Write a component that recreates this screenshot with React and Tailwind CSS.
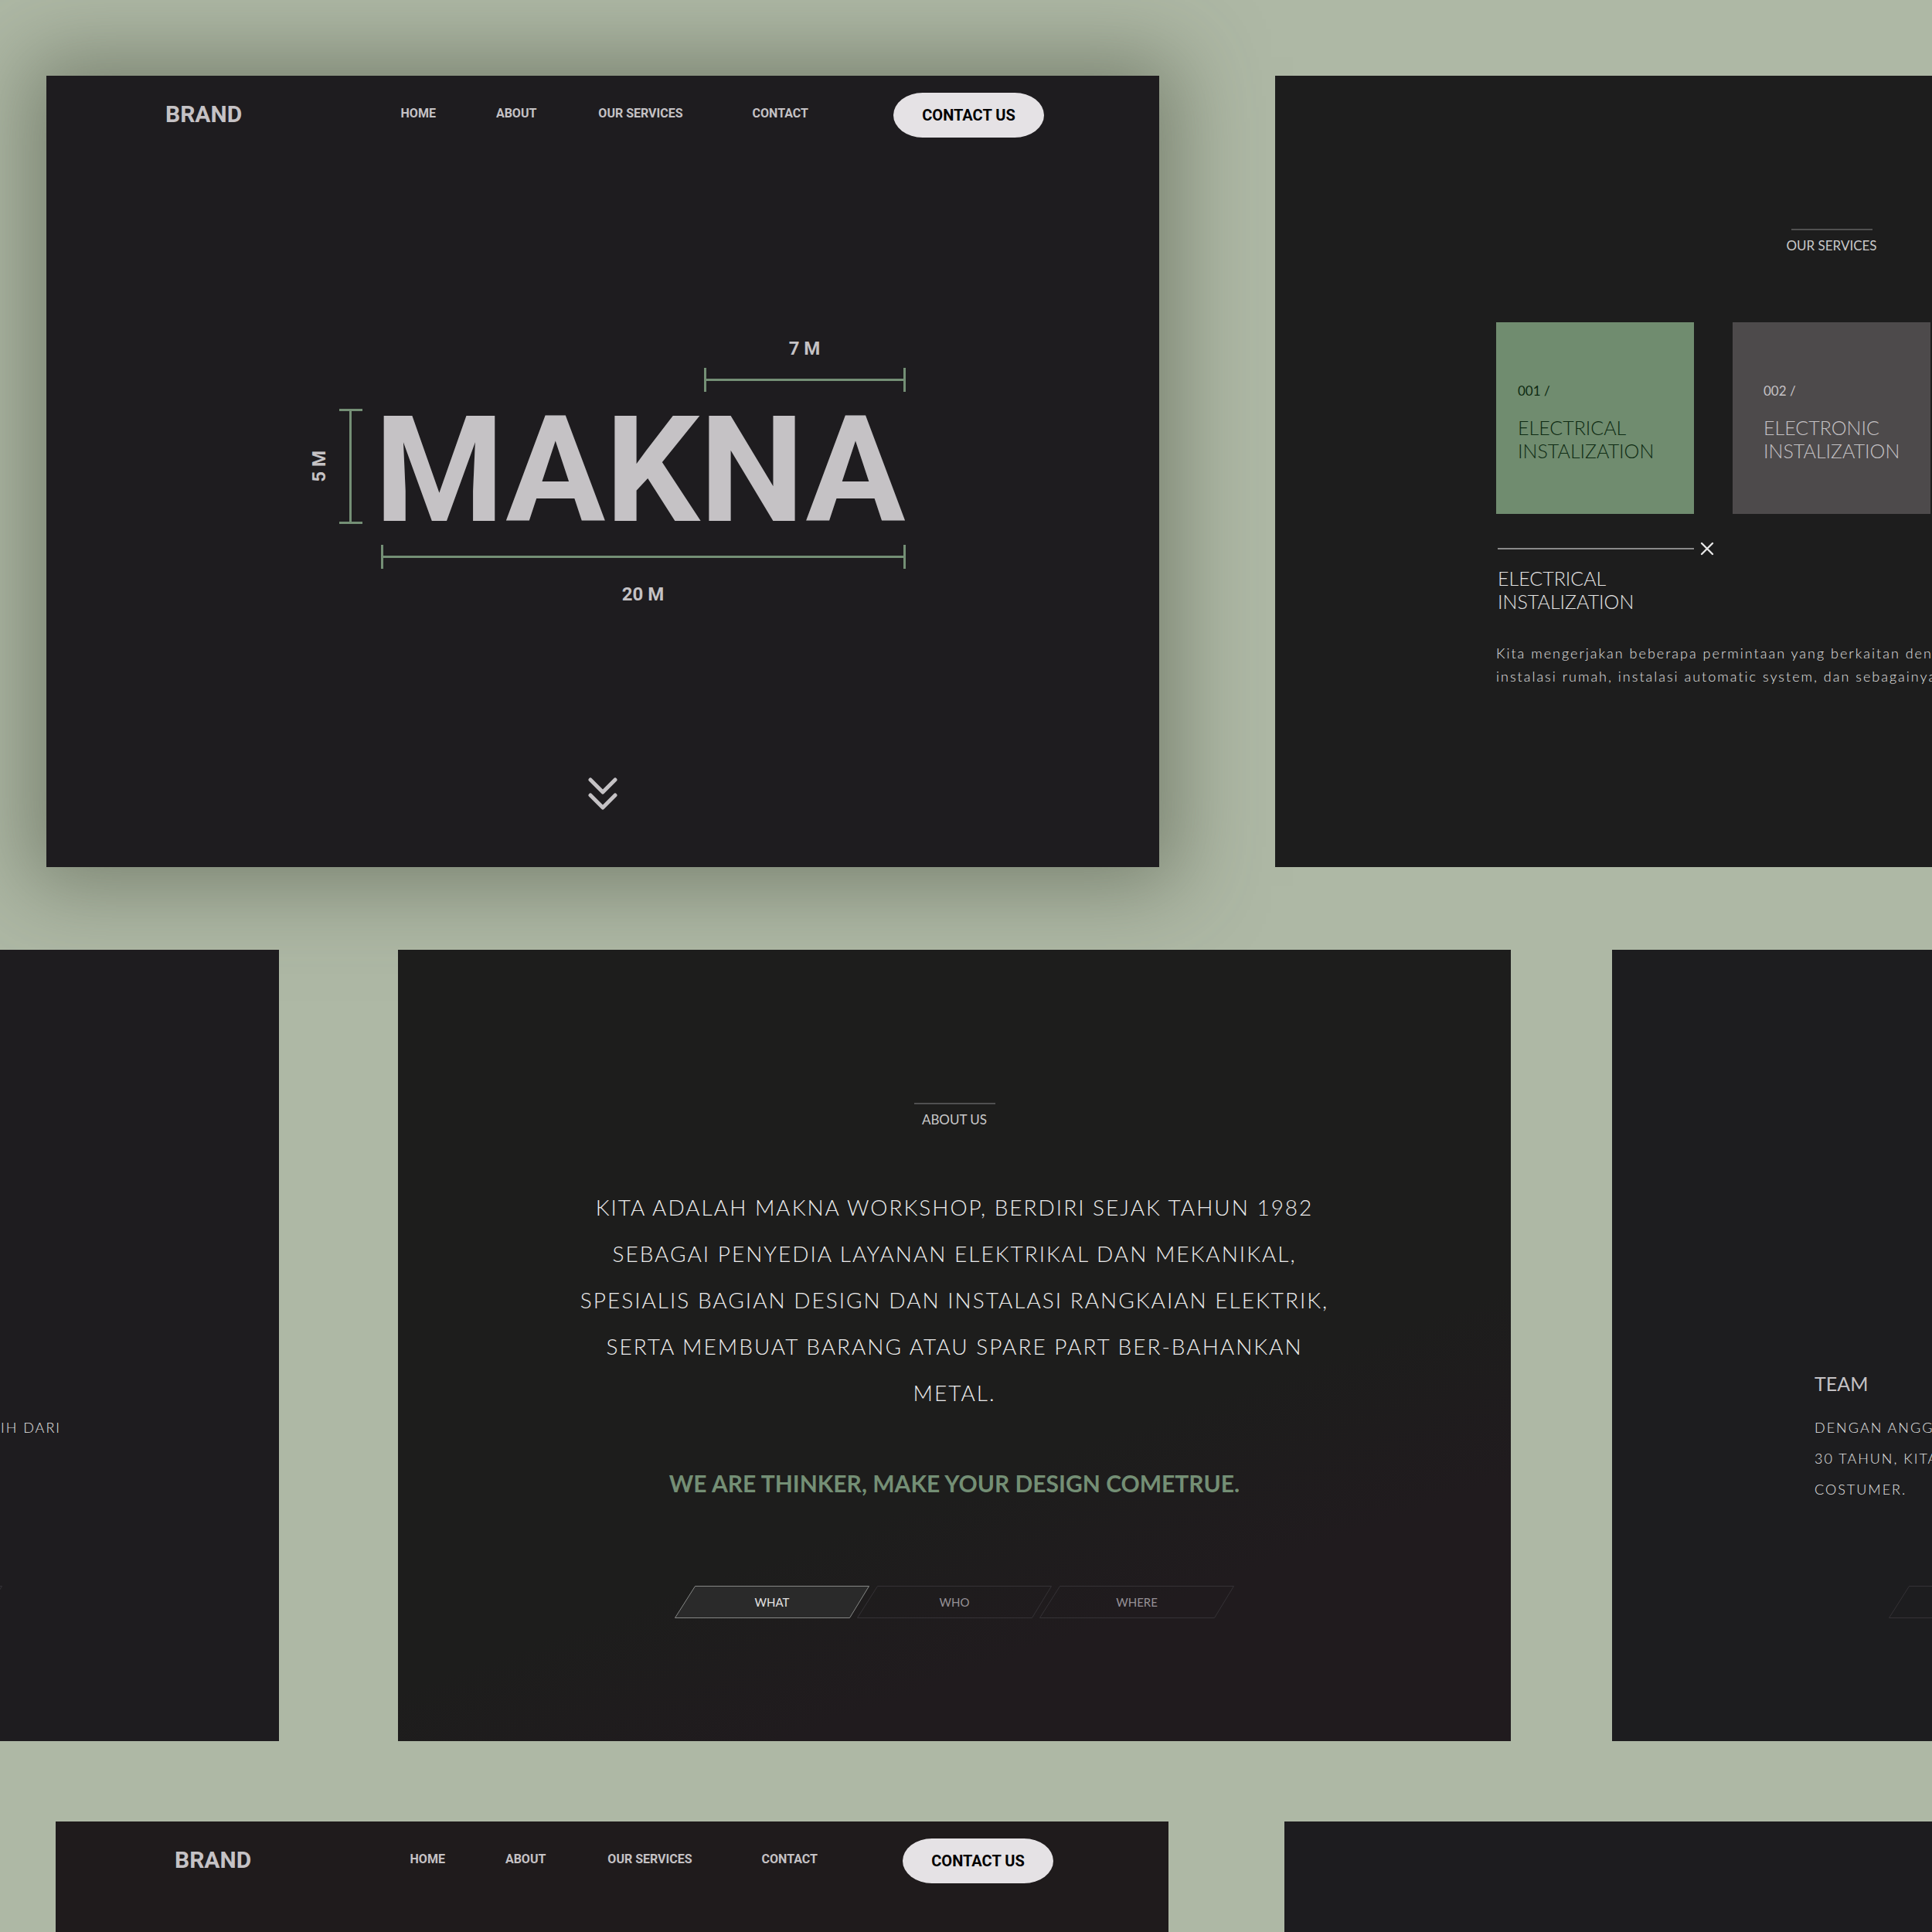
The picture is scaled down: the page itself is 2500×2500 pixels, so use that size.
const links = [
  { label: "HOME", gap: "" },
  { label: "ABOUT", gap: "ml-[78px]" },
  { label: "OUR SERVICES", gap: "ml-[80px]" },
  { label: "CONTACT", gap: "ml-[90px]" },
];

function NavBar() {
  return (
    <header className="flex items-start pt-[22px] pr-[149px] pl-[154px] font-['Roboto',sans-serif] leading-[56px] font-bold whitespace-nowrap text-[#c5c2c5]">
      <a href="#brand" className="text-[30px]">BRAND</a>
      <nav className="ml-auto flex text-base leading-[54px]">
        {links.map((l) => (
          <a key={l.label} href="#section" className={l.gap}>{l.label}</a>
        ))}
      </nav>
      <button type="button" className="ml-[110px] h-[58px] w-[195px] rounded-[38px/29px] bg-[#e5e2e5] text-xl font-bold text-black">
        CONTACT US
      </button>
    </header>
  );
}

function HorizontalRule() {
  return (
    <div className="flex h-[31px] items-center border-x-3 border-[#748f75]">
      <div className="h-[3px] w-full bg-[#748f75]" />
    </div>
  );
}

function Hero() {
  return (
    <section className="flex min-h-[1024px] flex-col bg-[#1e1c1f] shadow-[0_0_100px_24px_rgba(70,78,60,0.5)]">
      <NavBar />
      <div className="mt-[256px] grid grid-cols-[auto_679px] justify-center gap-x-6 pl-[10px] font-['Roboto',sans-serif] text-2xl leading-[34px] font-bold text-[#c5c2c5]">
        <div className="col-start-2 ml-auto w-[261px] text-center">
          <p className="mb-2">7 M</p>
          <HorizontalRule />
        </div>
        <div className="mt-[22px] flex items-center gap-3 self-start">
          <p className="rotate-180 leading-7 [writing-mode:vertical-rl]">5 M</p>
          <div className="flex h-[149px] w-[30px] justify-center border-y-3 border-[#748f75]">
            <div className="w-[3px] bg-[#748f75]" />
          </div>
        </div>
        <h1 className="mt-[27px] -ml-2 text-center text-[192px] leading-[149px]">MAKNA</h1>
        <div className="col-start-2 mt-[22px] text-center">
          <HorizontalRule />
          <p className="mt-4">20 M</p>
        </div>
      </div>
      <a href="#about" aria-label="Scroll down" className="mt-auto mb-[73px] self-center">
        <svg className="block h-[44px] w-[40px]" viewBox="0 0 40 44" fill="none" stroke="#c5c2c5" strokeWidth="5" strokeLinecap="round" strokeLinejoin="round">
          <path d="M4 4 20 20 36 4M4 24 20 40 36 24" />
        </svg>
      </a>
    </section>
  );
}

function SectionLabel({ children }) {
  return (
    <div className="flex flex-col items-center">
      <div className="h-[2px] w-[105px] bg-[#505050]" />
      <h2 className="mt-2 text-[17px] leading-6 text-[#c9c9c9]">{children}</h2>
    </div>
  );
}

function Services() {
  return (
    <section className="min-h-[1024px] overflow-hidden bg-[#1d1d1d] pt-[198px] pl-[286px] font-['Lato',sans-serif] whitespace-nowrap text-[#e4e4e4]">
      <div className="w-[868px]">
        <SectionLabel>OUR SERVICES</SectionLabel>
        <div className="mt-[87px] flex gap-[50px]">
          <article className="h-[248px] w-[256px] shrink-0 bg-[#708c6f] pt-[77px] pl-7 text-[#0d2a12]">
            <p className="text-[17px] leading-6">001 /</p>
            <h3 className="mt-5 text-[25px] leading-[30px] font-light">ELECTRICAL<br />INSTALIZATION</h3>
          </article>
          <article className="h-[248px] w-[256px] shrink-0 bg-[#4d4a4b] pt-[77px] pl-10 text-[#c5c2c5]">
            <p className="text-[17px] leading-6">002 /</p>
            <h3 className="mt-5 text-[25px] leading-[30px] font-light">ELECTRONIC<br />INSTALIZATION</h3>
          </article>
        </div>
        <div className="mt-9 flex items-center gap-2 pl-[2px]">
          <div className="h-[2px] w-[254px] bg-[#8a8a8a]" />
          <button type="button" aria-label="Close">
            <svg className="block size-[18px]" viewBox="0 0 18 18" fill="none" stroke="#e6e6e6" strokeWidth="2.4" strokeLinecap="round">
              <path d="M2 2 16 16M16 2 2 16" />
            </svg>
          </button>
        </div>
        <h3 className="mt-[14px] pl-[2px] text-[25px] leading-[30px] font-light">ELECTRICAL<br />INSTALIZATION</h3>
        <p className="mt-[37px] text-lg leading-[30px] font-light tracking-[2px]">
          Kita mengerjakan beberapa permintaan yang berkaitan dengan<br />
          instalasi rumah, instalasi automatic system, dan sebagainya.
        </p>
      </div>
    </section>
  );
}

function Tab({ children, active = false }) {
  return (
    <button type="button" aria-pressed={active} className={active ? "grid h-[42px] w-[252px] shrink-0 place-items-center text-[15px] text-[#e2e2e2]" : "grid h-[42px] w-[252px] shrink-0 place-items-center text-[15px] text-[#969196]"}>
      <svg className="col-start-1 row-start-1 block h-[42px] w-[252px]" viewBox="0 0 252 42" fill={active ? "#2a2a2a" : "none"} stroke={active ? "#868886" : "#353236"}>
        <path d="M26.5 .5H251.5L226.5 41.5H.5Z" />
      </svg>
      <span className="col-start-1 row-start-1">{children}</span>
    </button>
  );
}

function About() {
  return (
    <section className="min-h-[1024px] bg-[linear-gradient(160deg,#1d1d1c_62%,#201b1e_78%)] pt-[198px] text-center font-['Lato',sans-serif] text-[#ececec]">
      <SectionLabel>ABOUT US</SectionLabel>
      <p className="mx-auto mt-[71px] max-w-[980px] text-[28px] leading-[60px] font-light tracking-[2px]">
        KITA ADALAH MAKNA WORKSHOP, BERDIRI SEJAK TAHUN 1982 SEBAGAI PENYEDIA LAYANAN ELEKTRIKAL DAN MEKANIKAL, SPESIALIS BAGIAN DESIGN DAN INSTALASI RANGKAIAN ELEKTRIK, SERTA MEMBUAT BARANG ATAU SPARE PART BER-BAHANKAN METAL.
      </p>
      <p className="mt-[67px] text-[30px] leading-[40px] font-bold text-[#748f75]">WE ARE THINKER, MAKE YOUR DESIGN COMETRUE.</p>
      <div className="mt-[113px] flex justify-center -space-x-4">
        <Tab active>WHAT</Tab>
        <Tab>WHO</Tab>
        <Tab>WHERE</Tab>
      </div>
    </section>
  );
}

function Team() {
  return (
    <section className="min-h-[1024px] overflow-hidden bg-[#1d1d1f] pt-[545px] pl-[262px] font-['Lato',sans-serif] whitespace-nowrap text-[#e4e4e4]">
      <h2 className="text-[25px] leading-8 text-[#c5c2c5]">TEAM</h2>
      <p className="mt-[21px] text-lg leading-10 font-light tracking-[2px]">
        DENGAN ANGGOTA YANG LEBIH DARI<br />30 TAHUN, KITA MELAYANI<br />COSTUMER.
      </p>
      <div className="mt-[105px] ml-24 flex"><Tab>WHAT</Tab></div>
    </section>
  );
}

function Experience() {
  return (
    <section className="flex min-h-[1024px] flex-col items-end overflow-hidden bg-[#1e1c1f] pt-[598px] font-['Lato',sans-serif] text-lg whitespace-nowrap text-[#e4e4e4]">
      <p className="mr-[282px] leading-10 font-light tracking-[2px]">DENGAN ANGGOTA YANG LEBIH DARI</p>
      <div className="mt-[185px] mr-[358px]"><Tab>WHERE</Tab></div>
    </section>
  );
}

export default function App() {
  return (
    <main className="flex min-h-screen flex-col overflow-hidden bg-[#aeb8a5]">
      <div className="grid grid-cols-[minmax(0,1440fr)_minmax(0,850fr)] gap-[150px] pt-[98px] pl-[60px]">
        <Hero />
        <Services />
      </div>
      <div className="mt-[107px] grid grid-cols-[minmax(0,361fr)_minmax(0,1725fr)_minmax(0,414fr)]">
        <Experience />
        <div className="mr-[131px] ml-[154px]"><About /></div>
        <Team />
      </div>
      <div className="mt-[104px] grid grow grid-cols-[minmax(0,1440fr)_minmax(0,838fr)] gap-[150px] pl-[72px]">
        <section className="bg-[#1f1b1c]"><NavBar /></section>
        <section className="bg-[#1d1c1f]" />
      </div>
    </main>
  );
}
